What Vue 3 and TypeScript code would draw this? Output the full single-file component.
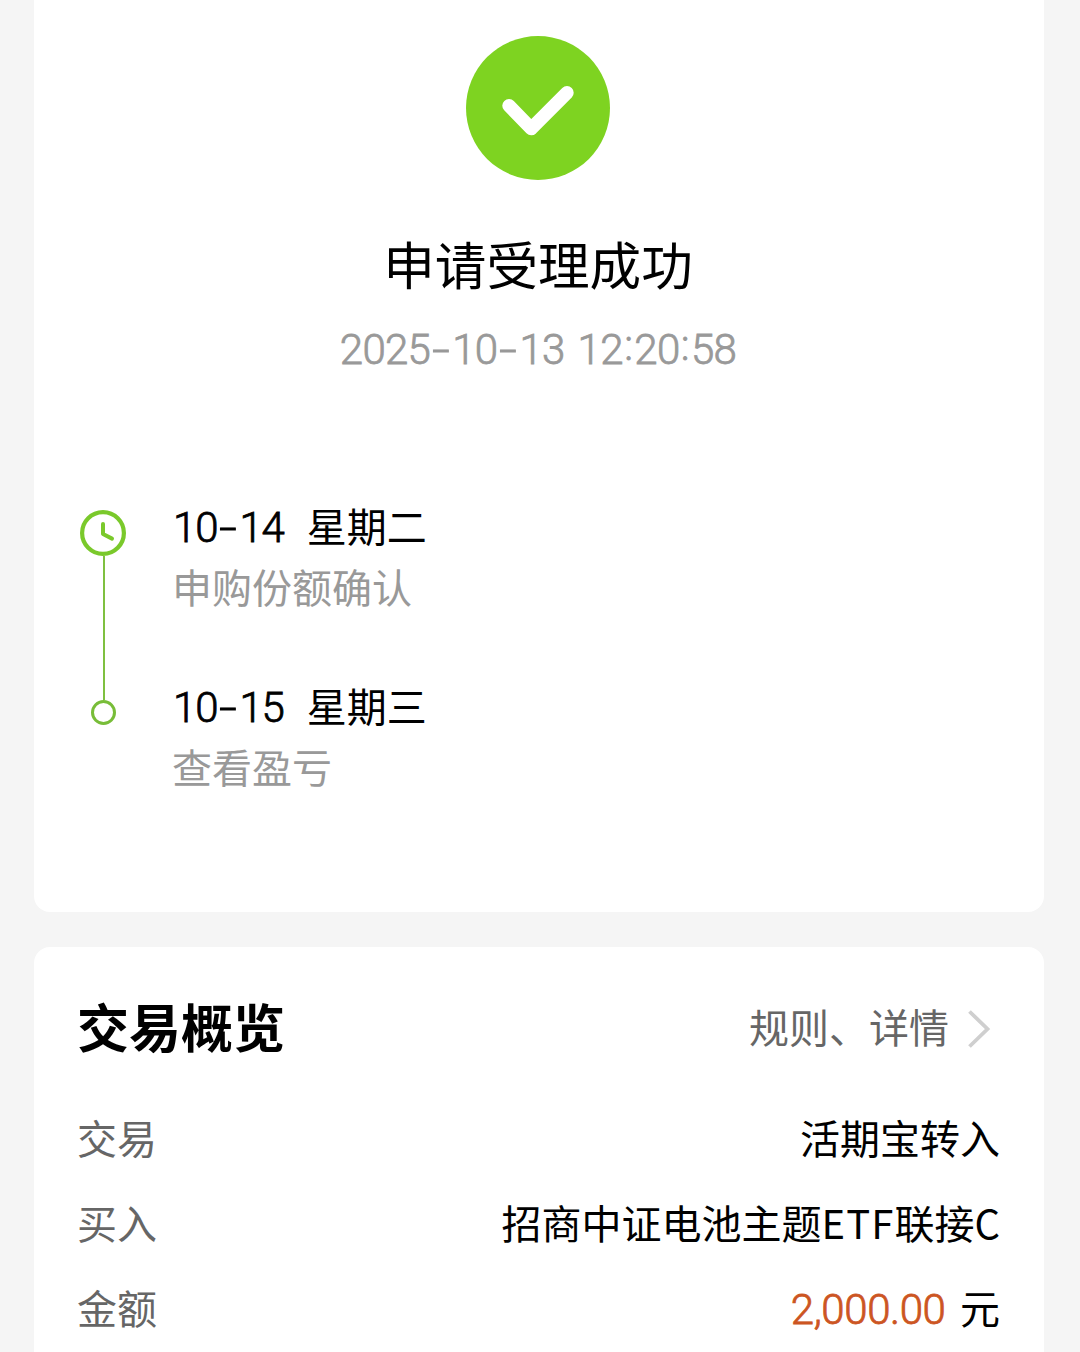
<script setup lang="ts">
interface Step {
  date: string
  weekday: string
  label: string
}

interface Piece {
  text: string
  kind: string
}

const timestamp = '2025-10-13 12:20:58'

const steps: Step[] = [
  { date: '10-14', weekday: '星期二', label: '申购份额确认' },
  { date: '10-15', weekday: '星期三', label: '查看盈亏' },
]

const amount = '2,000.00'

// Separators get their own spacing, so split them from the digit runs.
function pieces(value: string): Piece[] {
  const kinds: Record<string, string> = { '-': 'dash', ':': 'colon', ' ': 'space' }
  return value
    .split(/([-: ])/)
    .filter((t) => t !== '')
    .map((text) => ({ text, kind: kinds[text] ?? 'digits' }))
}
</script>

<template>
  <main class="page">
    <section class="card result">
      <svg class="badge" viewBox="0 0 144 144" aria-hidden="true">
        <circle cx="72" cy="72" r="72" fill="#7ed321" />
        <path d="M43 69.7 L65.3 92.6 L101 56.8" fill="none" stroke="#fff" stroke-width="13.4" stroke-linecap="round" stroke-linejoin="round" />
      </svg>
      <h1 class="title">申请受理成功</h1>
      <p class="time"><span class="num"><span v-for="(p, i) in pieces(timestamp)" :key="i" :class="p.kind">{{ p.text }}</span></span></p>

      <div class="timeline">
        <div class="rail">
          <svg class="clock" viewBox="0 0 46 46" aria-hidden="true">
            <circle cx="23" cy="23" r="20.9" fill="none" stroke="#7ac92b" stroke-width="4.2" />
            <path d="M23 14 V24 L32 28.6" fill="none" stroke="#7ac92b" stroke-width="4" stroke-linecap="round" stroke-linejoin="round" />
          </svg>
          <div class="line"></div>
          <div class="dot"></div>
        </div>
        <ol class="steps">
          <li v-for="step in steps" :key="step.date" class="step">
            <div class="when"><span class="num"><span v-for="(p, i) in pieces(step.date)" :key="i" :class="p.kind">{{ p.text }}</span></span><span class="weekday">{{ step.weekday }}</span></div>
            <div class="what">{{ step.label }}</div>
          </li>
        </ol>
      </div>
    </section>

    <section class="card overview">
      <header class="head">
        <h2>交易概览</h2>
        <div class="more">
          <span>规则、详情</span>
          <svg class="chevron" viewBox="0 0 24 40" aria-hidden="true">
            <path d="M2.5 2.5 L20.5 20 L2.5 37.5" fill="none" stroke="#cfcfcf" stroke-width="3.8" />
          </svg>
        </div>
      </header>
      <div class="row"><span class="key">交易</span><span>活期宝转入</span></div>
      <div class="row"><span class="key">买入</span><span>招商中证电池主题<span class="latin">ETF</span>联接<span>C</span></span></div>
      <div class="row"><span class="key">金额</span><span><span class="num amount">{{ amount }}</span><span class="unit">元</span></span></div>
    </section>
  </main>
</template>

<style>
body {
  background: #f5f5f5;
}
</style>

<style scoped>
.page {
  box-sizing: border-box;
  height: 1352px;
  overflow: hidden;
  padding: 0 36px 0 34px;
  background: #f5f5f5;
  color: #000;
  font-family: "Noto Sans CJK SC", sans-serif;
  font-size: 40px;
  display: flex;
  flex-direction: column;
  gap: 35px;
}

.card {
  box-sizing: border-box;
  background: #fff;
  flex: none;
}

.result {
  height: 912px;
  padding: 36px 44px 0;
  border-radius: 0 0 16px 16px;
  display: flex;
  flex-direction: column;
}

.badge {
  width: 144px;
  height: 144px;
  align-self: center;
  margin-right: 2px;
}

.title {
  margin: 47px 2px 0 0;
  height: 72px;
  line-height: 72px;
  font-size: 51.6px;
  font-weight: 400;
  text-align: center;
}

.time {
  margin: 18px 2px 0 0;
  height: 60px;
  line-height: 60px;
  color: #999;
  text-align: center;
  white-space: pre;
}

.num {
  font-family: Roboto, "Noto Sans CJK SC", sans-serif;
  font-size: 42px;
  font-weight: 300;
  letter-spacing: -0.7px;
  -webkit-text-stroke: 0.8px currentColor;
}

.dash {
  display: inline-block;
  width: 22px;
  text-align: center;
  letter-spacing: 0;
  transform: scaleX(1.5);
}

.colon {
  display: inline-block;
  width: 11.5px;
  text-align: center;
  letter-spacing: 0;
  transform: translateY(-4px);
}

.space {
  display: inline-block;
  width: 13px;
}

.timeline {
  display: flex;
  margin-top: 118px;
}

.rail {
  width: 50px;
  padding-top: 15px;
  display: flex;
  flex-direction: column;
  align-items: center;
}

.clock {
  width: 46px;
  height: 46px;
}

.line {
  width: 2px;
  height: 144px;
  margin-left: 2px;
  background: #7fc040;
}

.dot {
  box-sizing: border-box;
  width: 25px;
  height: 25px;
  border: 3px solid #78bd38;
  border-radius: 50%;
}

.steps {
  list-style: none;
  margin: 0;
  padding: 0 0 0 44px;
}

.step {
  height: 180px;
}

.when,
.what {
  height: 60px;
  line-height: 60px;
  white-space: nowrap;
}

.when .num {
  margin-left: 1px;
  letter-spacing: -1.1px;
}

.what {
  padding-top: 1px;
  height: 59px;
  color: #999;
}

.weekday {
  margin-left: 23px;
}

.overview {
  height: 460px;
  padding: 36px 44px 0 43px;
  border-radius: 16px 16px 0 0;
}

.head {
  display: flex;
  justify-content: space-between;
  align-items: center;
  height: 85px;
  margin-bottom: 27px;
}

h2 {
  margin: 0;
  font-size: 52px;
  line-height: 85px;
  font-weight: 700;
}

.more {
  display: flex;
  align-items: center;
  gap: 18px;
  padding-right: 9px;
  color: #666;
}

.chevron {
  width: 24px;
  height: 40px;
  margin-top: 6px;
}

.row {
  display: flex;
  justify-content: space-between;
  height: 85px;
  line-height: 85px;
  white-space: nowrap;
}

.key {
  color: #666;
}

.latin {
  letter-spacing: 1.1px;
}

.amount {
  color: #cc5522;
  letter-spacing: -0.4px;
}

.unit {
  margin-left: 14.5px;
}
</style>
